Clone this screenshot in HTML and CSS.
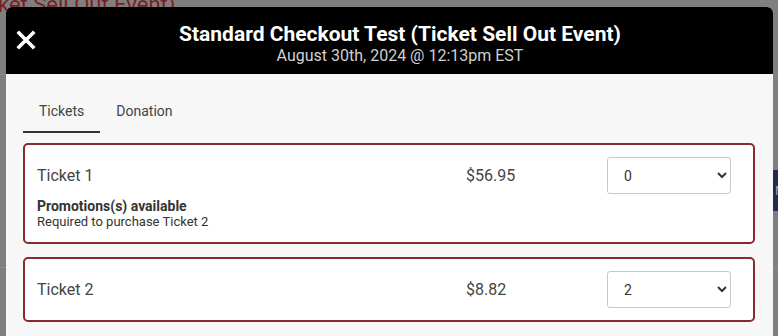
FILE: index.html
```html
<!DOCTYPE html>
<html lang="en">
<head>
    <meta charset="UTF-8">
    <meta name="viewport" content="width=device-width, initial-scale=1.0">
    <title>Checkout</title>
    <link rel="stylesheet" href="styles.css">
</head>
<body>
    <!-- page behind the dim overlay -->
    <div class="page">
        <h1 class="page-title">ket Sell Out Event)</h1>
        <div class="page-line"></div>
        <div class="page-btn">M</div>
        <div class="page-line low"></div>
    </div>

    <div class="modal">
        <div class="modal-head">
            <button class="close" type="button" aria-label="Close">
                <svg width="20" height="20" viewBox="0 0 20 20">
                    <path d="M3 3 L17 17 M17 3 L3 17" stroke="#fff" stroke-width="3.6" stroke-linecap="square" fill="none"/>
                </svg>
            </button>
            <div class="head-title">Standard Checkout Test (Ticket Sell Out Event)</div>
            <div class="head-date">August 30th, 2024 @ 12:13pm EST</div>
        </div>

        <div class="modal-body">
            <div class="tabs">
                <div class="tab active">Tickets</div>
                <div class="tab">Donation</div>
            </div>

            <div class="ticket">
                <div class="ticket-row">
                    <div class="ticket-name">Ticket 1</div>
                    <div class="ticket-price">$56.95</div>
                    <select class="qty">
                        <option selected>0</option>
                        <option>1</option>
                        <option>2</option>
                    </select>
                </div>
                <div class="promo-title">Promotions(s) available</div>
                <div class="promo-text">Required to purchase Ticket 2</div>
            </div>

            <div class="ticket">
                <div class="ticket-row">
                    <div class="ticket-name">Ticket 2</div>
                    <div class="ticket-price">$8.82</div>
                    <select class="qty">
                        <option>0</option>
                        <option>1</option>
                        <option selected>2</option>
                    </select>
                </div>
            </div>
        </div>
    </div>
</body>
</html>
```

FILE: styles.css
```css
body {
    margin: 0;
    background: #7f7f7f;
    font-family: Roboto, "Liberation Sans", sans-serif;
    overflow: hidden;
    height: 336px;
}

/* background page, already dimmed */
.page {
    display: flex;
    flex-direction: column;
}
.page-title {
    margin: 0 0 0 -2px;
    font-size: 22px;
    line-height: 22px;
    font-weight: 400;
    color: #7a1f1f;
    margin-top: -6px;
}
.page-line {
    height: 1px;
    background: #8c8c8c;
    margin-top: 58px;
}
.page-line.low {
    margin-top: 56px;
}
.page-btn {
    margin: 95px 0 0 auto;
    width: 20px;
    height: 41px;
    background: #262b4c;
    color: #9aa0bd;
    font-size: 13px;
    line-height: 41px;
    padding-left: 17px;
    box-sizing: border-box;
}

.modal {
    position: absolute;
    left: 6px;
    top: 7px;
    width: 767px;
    height: 340px;
    background: #f7f7f7;
    border-radius: 6px 6px 0 0;
    overflow: hidden;
}

.modal-head {
    position: relative;
    background: #000;
    height: 67px;
    box-sizing: border-box;
    padding: 15px 0 0 21px;
    text-align: center;
}
.close {
    position: absolute;
    left: 10px;
    top: 23px;
    width: 20px;
    height: 20px;
    padding: 0;
    border: 0;
    background: none;
    cursor: pointer;
}
.close svg {
    display: block;
}
.head-title {
    color: #fff;
    font-size: 21px;
    font-weight: 700;
    line-height: 25px;
}
.head-date {
    color: #d0d0d0;
    font-size: 16px;
    line-height: 18px;
}

.modal-body {
    padding: 16px 18px 0 17px;
}

.tabs {
    display: flex;
    margin-bottom: 10px;
}
.tab {
    padding: 0 16px;
    height: 43px;
    line-height: 43px;
    font-size: 14px;
    color: #444;
    box-sizing: border-box;
    border-bottom: 2px solid transparent;
}
.tab.active {
    border-bottom-color: #333;
}

.ticket {
    background: #fff;
    border: 2px solid #8b2a2a;
    border-radius: 5px;
    padding: 12px 22px 12px 12px;
    margin-bottom: 13px;
    color: #444;
}
.ticket-row {
    display: grid;
    grid-template-columns: 1fr 141px 124px;
    align-items: center;
}
.ticket-name,
.ticket-price {
    font-size: 16px;
}
.qty {
    height: 37px;
    width: 124px;
    border: 1px solid #c8c8c8;
    border-radius: 3px;
    background: #fff;
    padding: 0 8px 0 12px;
    font-family: Roboto, "Liberation Sans", sans-serif;
    font-size: 14px;
    color: #333;
}
.promo-title {
    margin-top: 4px;
    font-size: 14px;
    line-height: 16px;
    font-weight: 700;
    color: #333;
}
.promo-text {
    font-size: 13px;
    line-height: 16px;
    color: #333;
}
```
